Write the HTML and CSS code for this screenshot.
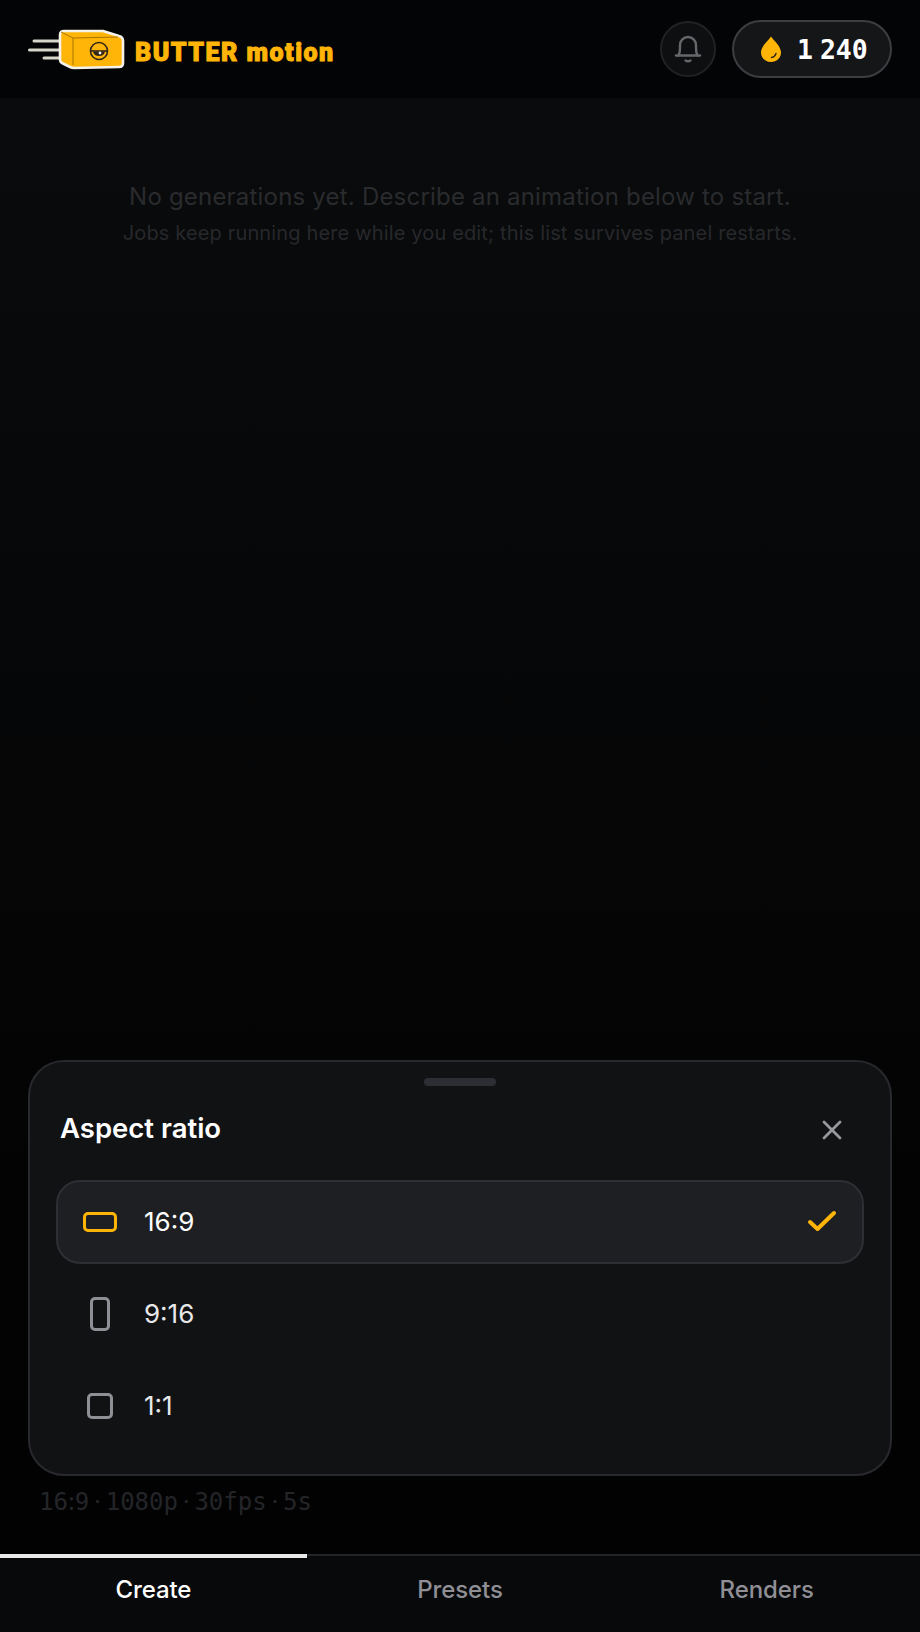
FILE: index.html
```html
<!DOCTYPE html>
<html lang="en">
<head>
  <meta charset="UTF-8">
  <meta name="viewport" content="width=device-width, initial-scale=1">
  <title>Butter Motion</title>
  <link rel="stylesheet" href="styles.css">
</head>
<body>
  <div class="app">
    <header class="topbar">
      <div class="brand">
        <svg class="brand-mark" width="98" height="44" viewBox="0 0 98 44">
          <g fill="none" stroke="#d8d5ca" stroke-width="3" stroke-linecap="round">
            <path d="M6 14H32"/>
            <path d="M1.500 23H32"/>
            <path d="M16 31H32"/>
          </g>
          <path d="M36 4H75L91 9Q95 10 95 14V36Q95 40 91 40L46 41Q44 41 42 40L34 36Q32 35 32 32V8Q32 4 36 4Z" fill="#ffb507" stroke="#f4f2ea" stroke-width="2.600" stroke-linejoin="round"/>
          <path d="M33 5L45 11V38M45 11L90 10" fill="none" stroke="#a87400" stroke-width="1"/>
          <circle cx="71" cy="24" r="8.5" fill="#ffb507" stroke="#33261a" stroke-width="1.6"/>
          <path d="M62.500 24H79.500" stroke="#33261a" stroke-width="1.600"/>
          <path d="M65 24.500H77Q76 29 71 29Q66 29 65 24.500Z" fill="#33261a"/>
          <circle cx="72" cy="26" r="1.400" fill="#f4f2ea"/>
        </svg>
        <span class="brand-name">BUTTER motion</span>
      </div>
      <div class="topbar-actions">
        <button class="bell-btn">
          <svg width="28" height="30" viewBox="0 0 28 30" fill="none" stroke="#66676b" stroke-width="2.400" stroke-linecap="round" stroke-linejoin="round">
            <path d="M2 21.500H26"/>
            <path d="M4.500 21.500Q6 19 6 14V11.500C6 6.500 9.500 3 14 3C18.500 3 22 6.500 22 11.500V14Q22 19 23.500 21.500"/>
            <path d="M11.500 26.500Q14 28 16.500 26.500"/>
          </svg>
        </button>
        <div class="credits">
          <svg width="20" height="26" viewBox="0 0 20 26">
            <path d="M10 0.500C13 5 20 10 20 16.500C20 22 15.500 26 10 26C4.500 26 0 22 0 16.500C0 10 7 5 10 0.500Z" fill="#ffb507"/>
            <path d="M10.500 21.500Q14 21 15 17.500" fill="none" stroke="#33261a" stroke-width="1.400" stroke-linecap="round"/>
          </svg>
          <span class="credits-value">1 240</span>
        </div>
      </div>
    </header>

    <main class="feed">
      <div class="empty">
        <p class="empty-title">No generations yet. Describe an animation below to start.</p>
        <p class="empty-sub">Jobs keep running here while you edit; this list survives panel restarts.</p>
      </div>
      <div class="meta">16<span class="meta-sep">:</span>9<span class="meta-sep"> · </span>1080p<span class="meta-sep"> · </span>30fps<span class="meta-sep"> · </span>5s</div>
    </main>

    <nav class="tabs">
      <div class="tab tab-active">Create</div>
      <div class="tab">Presets</div>
      <div class="tab">Renders</div>
    </nav>

    <section class="sheet">
      <div class="sheet-handle"></div>
      <div class="sheet-head">
        <h2 class="sheet-title">Aspect ratio</h2>
        <svg class="sheet-close" width="20" height="20" viewBox="0 0 20 20" fill="none" stroke="#98989d" stroke-width="2.800" stroke-linecap="round">
          <path d="M2 2L18 18M18 2L2 18"/>
        </svg>
      </div>
      <div class="options">
        <div class="option option-selected">
          <span class="option-icon">
            <svg width="34" height="20" viewBox="0 0 34 20" fill="none" stroke="#ffb507" stroke-width="3"><rect x="1.500" y="1.500" width="31" height="17" rx="3.500"/></svg>
          </span>
          <span class="option-label">16:9</span>
          <svg class="option-check" width="30" height="24" viewBox="0 0 30 24" fill="none" stroke="#ffb507" stroke-width="4" stroke-linecap="round" stroke-linejoin="round"><path d="M3 12L10.500 19L27 3"/></svg>
        </div>
        <div class="option">
          <span class="option-icon">
            <svg width="20" height="34" viewBox="0 0 20 34" fill="none" stroke="#8f8f95" stroke-width="3"><rect x="1.500" y="1.500" width="17" height="31" rx="3.500"/></svg>
          </span>
          <span class="option-label">9:16</span>
        </div>
        <div class="option">
          <span class="option-icon">
            <svg width="26" height="26" viewBox="0 0 26 26" fill="none" stroke="#8f8f95" stroke-width="3"><rect x="1.500" y="1.500" width="23" height="23" rx="3.500"/></svg>
          </span>
          <span class="option-label">1:1</span>
        </div>
      </div>
    </section>
  </div>
</body>
</html>
```

FILE: styles.css
```css
* {
  box-sizing: border-box;
}

body {
  margin: 0;
  background: #000;
  color: #fff;
  font-family: 'Inter', 'Liberation Sans', sans-serif;
}

.app {
  position: relative;
  display: flex;
  flex-direction: column;
  height: 100vh;
  overflow: hidden;
}

.topbar {
  display: flex;
  align-items: center;
  justify-content: space-between;
  height: 98px;
  padding: 0 28px;
  background: #030405;
}

.brand {
  display: flex;
  align-items: center;
  gap: 9px;
}

.brand-mark {
  display: block;
}

.brand-name {
  margin-top: 6px;
  font-family: 'Roboto', sans-serif;
  font-weight: 900;
  font-size: 25px;
  letter-spacing: 1.500px;
  color: #ffb507;
  -webkit-text-stroke: 1px #ffb507;
}

.topbar-actions {
  display: flex;
  align-items: center;
  gap: 16px;
}

.bell-btn {
  display: flex;
  align-items: center;
  justify-content: center;
  width: 56px;
  height: 56px;
  padding: 0;
  background: #0e0f11;
  border: 2px solid #212225;
  border-radius: 50%;
}

.credits {
  display: flex;
  align-items: center;
  gap: 16px;
  width: 160px;
  height: 58px;
  padding-left: 27px;
  background: #151618;
  border: 2px solid #3d3e42;
  border-radius: 29px;
}

.credits-value {
  font-family: 'DejaVu Sans Mono', monospace;
  font-weight: 700;
  font-size: 26.500px;
  word-spacing: -9px;
}

.feed {
  flex: 1;
  display: flex;
  flex-direction: column;
  justify-content: space-between;
  background: linear-gradient(to bottom, #0a0b0c, #030304 75%, #020203);
}

.empty {
  padding-top: 82px;
  text-align: center;
}

.empty-title {
  margin: 0;
  font-size: 24px;
  letter-spacing: 0.2px;
  line-height: 34px;
  color: #2a2b2e;
}

.empty-sub {
  margin: 3px 0 0;
  font-size: 20px;
  letter-spacing: 0.15px;
  line-height: 32px;
  color: #27282b;
}

.meta {
  padding: 0 0 34px 39px;
  font-family: 'DejaVu Sans Mono', monospace;
  font-size: 24px;
  line-height: 36px;
  color: #242528;
}

.meta-sep {
  font-family: 'Inter', sans-serif;
  word-spacing: -2px;
}

.tabs {
  display: flex;
  height: 78px;
  background: #08090b;
  border-top: 2px solid #232428;
}

.tab {
  flex: 1;
  margin-top: -2px;
  padding-bottom: 12px;
  display: flex;
  align-items: center;
  justify-content: center;
  font-size: 24px;
  font-weight: 500;
  letter-spacing: -0.1px;
  color: #8f8f95;
  border-top: 4px solid transparent;
}

.tab-active {
  color: #fff;
  border-top-color: #e8e8e8;
}

.sheet {
  position: absolute;
  left: 28px;
  right: 28px;
  top: 1060px;
  height: 416px;
  padding: 16px 26px 0;
  background: #111214;
  border: 2px solid #28292d;
  border-radius: 36px;
}

.sheet-handle {
  width: 72px;
  height: 8px;
  margin: 0 auto;
  background: #2d2e33;
  border-radius: 4px;
}

.sheet-head {
  display: flex;
  align-items: center;
  justify-content: space-between;
  height: 36px;
  margin-top: 24px;
  padding: 0 22px 0 4px;
}

.sheet-title {
  margin: 0;
  font-size: 27.500px;
  font-weight: 600;
}

.sheet-close {
  margin-top: 4px;
}

.options {
  display: flex;
  flex-direction: column;
  gap: 8px;
  margin-top: 34px;
}

.option {
  display: flex;
  align-items: center;
  height: 84px;
  padding: 0 25px;
  border: 2px solid transparent;
  border-radius: 24px;
  font-size: 26px;
  color: #e8e8ea;
}

.option-selected {
  background: #1e1f23;
  border-color: #2e2f34;
  color: #fff;
}

.option-icon {
  display: flex;
  align-items: center;
  justify-content: center;
  width: 34px;
  margin-right: 27px;
}

.option-label {
  flex: 1;
  padding-bottom: 2px;
}

.option-check {
  margin-right: 0;
}
```
